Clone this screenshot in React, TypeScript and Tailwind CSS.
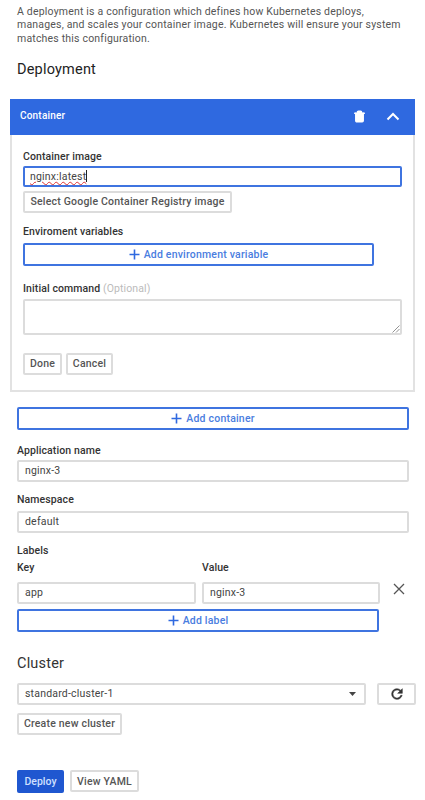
import React from "react";
import { Trash2 } from "lucide-react";

const labelCls = "block h-[14px] text-[10.5px] leading-[14px] font-medium text-[#333] tracking-[0.1px]";
const boxCls = "h-[22px] border-2 border-[#dcdcdc] bg-white rounded-[2px] px-[6px] flex items-center text-[10.5px] text-[#444] tracking-[0.2px]";
const btnCls = "h-[22px] border-2 border-[#dcdcdc] bg-white rounded-[2px] flex items-center justify-center text-[10.5px] font-medium text-[#555] tracking-[0.2px]";

function Plus() {
  return (
    <svg width="11" height="11" viewBox="0 0 11 11" className="mr-[4px] shrink-0">
      <path d="M5.5 0.5v10M0.5 5.5h10" stroke="#2f69e0" strokeWidth="1.6" fill="none" />
    </svg>
  );
}

function AddButton({ text, className }: { text: string; className: string }) {
  return (
    <div className={`h-[23px] border-2 border-[#3f74e0] rounded-[2px] bg-white flex items-center justify-center text-[10.5px] font-medium text-[#4a7de0] tracking-[0.2px] ${className}`}>
      <Plus />
      {text}
    </div>
  );
}

export default function App() {
  return (
    <div className="w-[425px] h-[800px] overflow-hidden bg-white font-['Roboto',sans-serif] text-[#444]">
      <div className="pl-[17px] pr-[15px] pt-[5px] text-[10.5px] leading-[13.3px] text-[#555] tracking-[0.19px]">
        <p>A deployment is a configuration which defines how Kubernetes deploys,</p>
        <p>manages, and scales your container image. Kubernetes will ensure your system</p>
        <p>matches this configuration.</p>
      </div>
      <h2 className="pl-[17px] mt-[15px] h-[20px] text-[14.5px] leading-[20px] text-[#222] tracking-[0.2px]">Deployment</h2>

      <div className="mx-[10px] mt-[19px] w-[405px] h-[293px] border-2 border-t-0 border-[#e2e2e2] bg-white">
        <div className="-mx-[2px] h-[36px] bg-[#2f69e0] flex items-center pl-[10px] pr-[15px] text-white">
          <span className="text-[10px] font-medium tracking-[0.2px] -mt-[3px] flex-1">Container</span>
          <Trash2 size={13} strokeWidth={2.4} fill="#fff" className="mr-[20px]" />
          <svg width="14" height="9" viewBox="0 0 14 9">
            <path d="M1.5 7.5L7 2l5.5 5.5" stroke="#fff" strokeWidth="2" fill="none" />
          </svg>
        </div>
        <div className="pl-[11px] pr-[11px] pt-[15px]">
          <label className={labelCls}>Container image</label>
          <div className="relative mt-[2px] h-[21px] border-2 border-[#3f74e0] rounded-[2px] px-[5px] flex items-center text-[10.5px] text-[#444] tracking-[0.2px]">
            <span className="underline decoration-[#d33] decoration-wavy decoration-[0.7px]">nginx:latest</span>
            <span className="w-px h-[12px] bg-[#222]"></span>
          </div>
          <div className={`${btnCls} mt-[4px] w-[209px] h-[21px]`}>Select Google Container Registry image</div>
          <label className={`${labelCls} mt-[12px]`}>Enviroment variables</label>
          <AddButton text="Add environment variable" className="mt-[4px] w-[351px]" />
          <label className={`${labelCls} mt-[16px]`}>
            Initial command <span className="font-normal text-[#bbb]">(Optional)</span>
          </label>
          <div className="relative mt-[3px] h-[36px] border-2 border-[#dcdcdc] rounded-[2px]">
            <svg width="8" height="8" viewBox="0 0 8 8" className="absolute right-0 bottom-0">
              <path d="M0.5 7.5L7.5 0.5M4 7.5L7.5 4" stroke="#777" strokeWidth="0.8" fill="none" />
            </svg>
          </div>
          <div className="mt-[18px] flex gap-[4px]">
            <div className={`${btnCls} w-[39px] h-[21px]`}>Done</div>
            <div className={`${btnCls} w-[47px] h-[21px]`}>Cancel</div>
          </div>
        </div>
      </div>

      <div className="pl-[17px] pr-[10px] pt-[15px]">
        <AddButton text="Add container" className="w-[392px]" />
        <label className={`${labelCls} mt-[14px]`}>Application name</label>
        <div className={`${boxCls} mt-[2px] w-[392px] h-[21px]`}>nginx-3</div>
        <label className={`${labelCls} mt-[11px]`}>Namespace</label>
        <div className={`${boxCls} mt-[4px] w-[392px]`}>default</div>
        <label className={`${labelCls} mt-[11px]`}>Labels</label>
        <div className="mt-[3px] flex gap-[6px]">
          <label className={`${labelCls} w-[179px]`}>Key</label>
          <label className={labelCls}>Value</label>
        </div>
        <div className="mt-[7px] flex items-center gap-[6px]">
          <div className={`${boxCls} w-[179px] h-[21px]`}>app</div>
          <div className={`${boxCls} w-[178px] h-[21px]`}>nginx-3</div>
          <svg width="12" height="12" viewBox="0 0 12 12" className="ml-[7px] -mt-[7px]">
            <path d="M1 1l10 10M11 1L1 11" stroke="#555" strokeWidth="1.3" fill="none" />
          </svg>
        </div>
        <AddButton text="Add label" className="mt-[5px] w-[362px]" />
        <h2 className="mt-[22px] h-[20px] text-[14.5px] leading-[20px] text-[#333] tracking-[0.2px]">Cluster</h2>
        <div className="mt-[9px] flex gap-[11px]">
          <div className={`${boxCls} w-[349px] shrink-0 h-[21px] justify-between pr-[8px]`}>
            <span>standard-cluster-1</span>
            <svg width="7" height="4" viewBox="0 0 7 4"><path d="M0 0h7L3.5 4z" fill="#444" /></svg>
          </div>
          <div className={`${btnCls} w-[39px] shrink-0 h-[21px]`}>
            <svg width="16" height="16" viewBox="0 0 24 24">
              <path d="M17.65 6.35A7.96 7.96 0 0 0 12 4a8 8 0 1 0 7.73 10h-2.08A6 6 0 1 1 12 6c1.66 0 3.14.69 4.22 1.78L13 11h7V4l-2.35 2.35z" fill="#333" stroke="#333" strokeWidth="0.8" />
            </svg>
          </div>
        </div>
        <div className={`${btnCls} mt-[8px] w-[105px] h-[21px]`}>Create new cluster</div>
        <div className="mt-[35px] flex items-center gap-[6px]">
          <div className="w-[47px] h-[23px] rounded-[2px] bg-[#1f57d0] flex items-center justify-center text-[10.5px] font-medium text-[#cfe0ff]">Deploy</div>
          <div className={`${btnCls} w-[69px]`}>View YAML</div>
        </div>
      </div>
    </div>
  );
}
